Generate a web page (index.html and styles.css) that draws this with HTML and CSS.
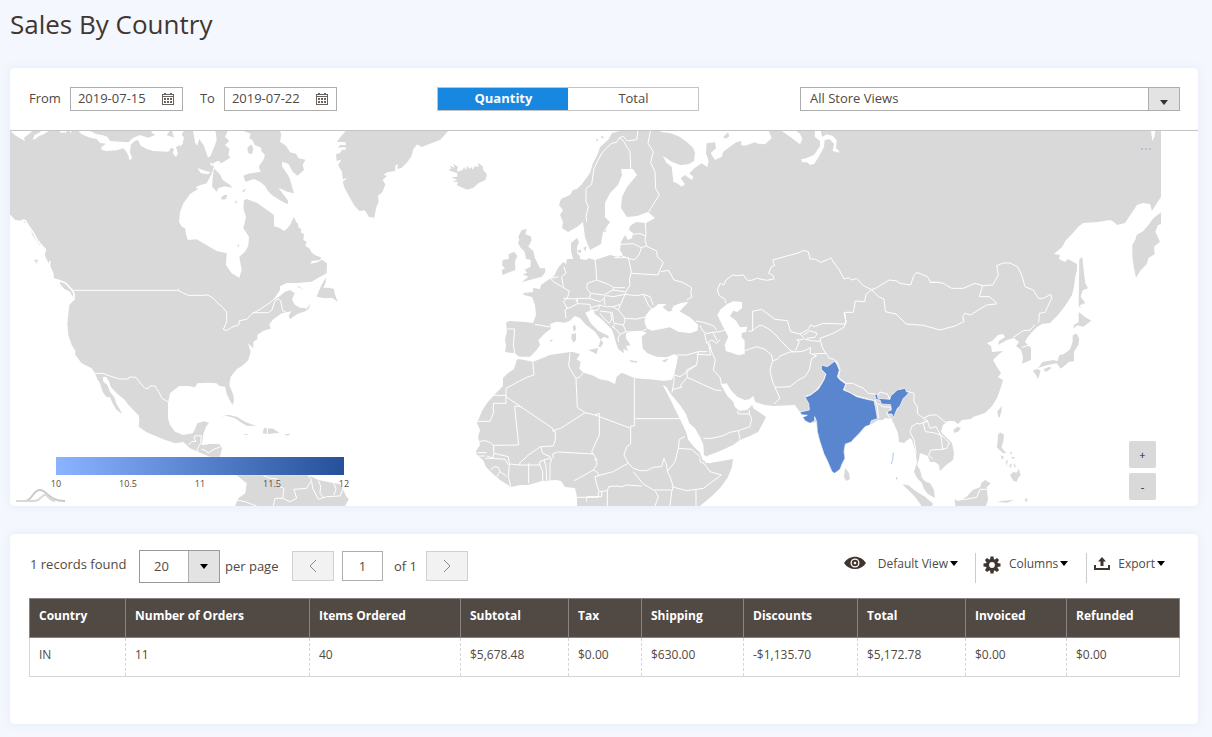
FILE: index.html
```html
<!DOCTYPE html>
<html lang="en">
<head>
<meta charset="utf-8">
<title>Sales By Country</title>
<link rel="stylesheet" href="styles.css">
</head>
<body>
<h1 class="page-title">Sales By Country</h1>

<section class="card">
  <form class="filters">
    <div class="dates">
      <label for="from">From</label>
      <span class="date-field">
        <input id="from" type="text" value="2019-07-15">
        <button type="button" class="calendar" aria-label="Choose start date"><svg width="12" height="12" viewBox="0 0 12 12"><use href="#calendar"/></svg></button>
      </span>
      <label for="to" class="to-label">To</label>
      <span class="date-field">
        <input id="to" type="text" value="2019-07-22">
        <button type="button" class="calendar" aria-label="Choose end date"><svg width="12" height="12" viewBox="0 0 12 12"><use href="#calendar"/></svg></button>
      </span>
    </div>
    <div class="switch">
      <button type="button" class="switch-item active">Quantity</button>
      <button type="button" class="switch-item">Total</button>
    </div>
    <span class="select store-select">
      <select aria-label="Store view"><option>All Store Views</option></select>
      <span class="arrow"></span>
    </span>
  </form>

  <div class="map">
    <svg class="world" viewBox="10 131 1188 375" role="img" aria-label="World map of sales">
      <!-- North America -->
      <g class="land">
        <path d="M10,131H186V180L198,189 190,194 183,204 180,212 179,222 182,227 188,240V294H73L69,287 62,282 54,278 52,270 48,262 45,256 44,249 38,243 33,236 29,226 23,221 15,220 10,215z"/>
        <g transform="translate(180 125) scale(.33333)">
          <path d="M-9,14H145L135,35 148,48 135,60 149,72 145,88 150,98 135,108 112,108 98,116 90,112 92,120 102,124 96,145 80,175 62,180 40,190 30,205 -9,230z"/>
          <path d="M-6,300 15,310 22,345 50,343 75,358 110,378 140,385 138,420 155,445 178,458 185,435 178,395 195,380 205,362 207,335 190,310 198,275 190,250 192,226 200,222 232,234 262,256 282,270 282,304 298,308 312,318 322,310 330,300 342,275 348,290 354,296 356,308 364,312 362,322 372,328 370,345 380,350 376,362 390,372 394,382 405,390 425,398 418,406 395,408 392,416 412,412 426,404 441,415 440,445 415,458 395,470 350,474 320,474 295,486 280,505 240,550 205,590H-6z"/>
          <path d="M102,130 120,148 128,165 150,180 158,188 132,184 115,190 110,200 96,185 98,160zM122,220 132,210 142,210 138,222 128,224zM165,225 172,232 168,238zM116,98 135,110 120,114z"/>
          <path d="M180,14H298L304,28 300,50 318,62 330,82 348,86 356,100 376,104 368,120 372,135 352,152 338,140 325,116 306,110 306,124 324,150 330,162 334,178 342,205 322,200 295,188 325,228 322,238 300,226 278,212 262,196 256,184 240,170 222,162 196,170 190,152 204,146 232,142 242,140 236,125 250,105 255,90 244,78 244,68 224,60 218,46 208,40 212,26z"/>
          <path d="M410,515 422,485 437,458 438,470 430,488 448,488 462,492 465,510 474,530 456,518 434,520z"/>
          <path d="M352,482 370,492 356,488z"/>
        </g>
        <g transform="translate(60 280) scale(.33333)">
          <path d="M0,20 30,35 42,60 28,75 22,130 25,165 35,195 46,212 46,225 65,250 95,265 105,280 112,298 120,310 128,335 138,350 150,352 158,370 168,388 186,403 178,385 168,370 165,355 150,335 142,315 130,305 128,292 138,290 148,305 152,320 170,340 192,358 206,375 220,390 236,406 238,422 236,440 260,457 310,478 345,490 370,486 390,505 420,518 450,530H480L486,505 478,492 450,492 425,496 430,462 438,440 447,428 432,424 412,430 405,448 398,460 370,465 345,455 330,435 324,415 324,370 330,340 345,328 358,318 385,318 405,322 412,310 450,308 470,310 478,318 495,320 500,342 510,362 518,375 522,362 520,345 508,315 512,290 530,268 550,255 565,240 572,215 564,190 580,205 580,185 592,178 592,165 610,152 632,146 628,132 640,118 665,100 695,94 686,106 690,118 712,102 740,92 736,84 722,84 704,74 696,58 704,40 690,30 675,35 655,52 640,60 660,30 660,5H0z"/>
          <path d="M478,412 505,404 530,410 555,425 588,438 560,437 545,428 525,415 498,407zM612,444 640,446 658,458 625,462 608,460zM675,462H690L688,466H676zM550,462H565L560,466zM738,88 752,70 744,90z"/>
          <path d="M530,586H742L758,592 775,600 805,606 838,612 848,625 858,648 866,658 855,678H525L535,655 556,640 560,610z"/>
        </g>
        <!-- Greenland and Iceland -->
        <g transform="translate(330 125) scale(.33333)">
          <path d="M50,14H358L330,45 300,56 275,66 262,58 250,72 245,92 232,112 215,128 202,132 203,116 196,122 196,138 172,142 160,150 172,152 158,165 166,178 158,200 144,212 146,230 138,250 133,278 117,276 104,256 88,258 72,240 58,215 44,190 38,170 52,160 38,162 36,140 24,120 34,104 20,108 18,88 30,84 36,74 48,74 46,66 24,68 30,60 48,60 46,52 20,50z"/>
          <path d="M356,136 364,130 360,122 374,128 370,116 384,126 380,140 398,135 402,126 408,136 412,122 418,132 424,126 428,134 434,124 446,126 444,114 458,124 460,136 471,148 466,165 445,175 430,188 412,194 392,186 380,180 385,172 366,170 382,165 364,157 382,155 382,145z"/>
        </g>
      </g>
      <g class="water" transform="translate(0 125) scale(.33333)">
        <path d="M28,14 44,30 60,40 75,47 72,38 88,26 98,17 100,14zM98,44 104,30 120,22 125,14H152L132,28 116,34 106,42zM178,14 182,24 195,22 198,27 200,14zM206,14 212,24 217,14z"/>
        <path d="M232,14 245,28 270,38 290,42 300,54 318,56 305,65 304,74 320,78 350,76 370,70 378,78 386,94 388,106 397,100 390,82 392,60 404,48 414,45 422,62 440,72 460,78 505,80 514,68 522,72 518,85 528,96 534,85 528,66 548,56 540,44 550,38 545,28 554,14H515L522,38 500,30 508,20 500,14H452L456,24 466,30 445,38 420,30 400,38 385,52 360,50 330,48 322,35 305,30 290,28 275,20 262,14zM578,14 584,44 592,60 600,36V14z"/>
      </g>
      <g class="water" transform="translate(180 125) scale(.33333)">
        <path d="M38,14 46,30 44,52 52,62 56,40 72,62 84,98 92,92 104,62 110,45 106,14zM52,128 66,134 92,142 84,148 62,144zM0,30 12,36 8,56 0,66z"/>
        <path d="M202,68 214,58 220,70 216,88 204,84zM174,356 178,362 172,366z" class="fill-land"/>
        <path d="M186,198 198,190 192,202z" class="fill-land"/>
      </g>
      <g class="border" transform="translate(0 125) scale(.33333)">
        <path d="M30,272 46,290 60,302 66,286 76,286 86,304 98,320 112,346 122,358 136,374 132,388 116,386 106,368 92,350 80,330 68,318 60,302M70,300 88,322 96,344 112,362 128,378M85,320 108,372M64,310 84,340M150,408 148,425 158,445 160,464 176,466 196,474 214,492 222,505 222,525M160,464 180,480 204,510 218,515" stroke-width="5"/>
        <path d="M216,496H534"/>
        <path d="M102,404 114,404 110,416z" class="fill-land"/>
      </g>
      <g class="border" transform="translate(60 280) scale(.33333)">
        <path d="M355,26V32L372,40 386,46 424,46 444,45 460,55 472,68 488,82 500,96V125L490,148 500,152 515,142 537,134 538,122 560,118 575,102 600,88 630,68 650,50M578,98 625,98 636,90 645,62 655,57 662,62 668,92 680,98"/>
        <path d="M105,280 128,280 150,288 178,297 205,297 208,291 228,292 240,308 255,325 266,325 270,318 285,318 296,335 306,355 325,366M386,495 396,484 408,484 402,474 404,468 424,467 422,488M422,488 430,495M422,490 410,510 416,515M424,508 438,512 444,520 465,506 480,502M622,442V462"/>
        <path d="M610,586 630,595 650,596 660,620 672,625 668,655 690,665 710,655 702,628 740,625 755,600 745,588M755,605 758,625 775,658 800,650 840,648 852,620M775,602 782,618 780,640 790,652M820,608 828,625 822,645M530,660 555,665 590,678M640,678 645,655 668,655"/>
      </g>

      <!-- Europe, Asia and Africa -->
      <path class="land" d="M620,131H1161V197L1157,203 1152,211 1150,204 1143,203 1137,205 1131,214 1125,223 1117,225 1114,222 1110,220 1098,222 1083,223 1078,227 1073,233 1066,240 1062,247 1054,254 1060,255 1059,259 1065,262 1068,259 1077,264 1077,270 1075,278 1074,287 1072,295 1065,306 1058,315 1050,323 1042,324 1037,327 1032,332 1027,338 1025,342 1031,348 1031,360 1026,362 1022,364 1023,357 1021,350 1016,346 1019,342 1014,338 1007,340 998,345 999,341 1005,337 1003,334 998,335 992,341 987,343 991,346 992,352 1003,351 998,355 993,360 997,367 1001,373 998,377 1003,380 1001,387 997,398 992,406 985,413 973,417 971,419 962,420 958,424 954,421 948,421 943,425 941,432 947,438 952,443 954,453 953,460 945,466 940,471 939,465 935,462 930,462 928,456 920,453 919,459 917,465 920,470 922,478 926,482 930,483 934,490 935,498 928,494 924,489 922,483 917,478 914,472 917,462 915,450 912,440 910,438 904,443 899,442 898,433 894,424 891,419 885,418 883,420 878,420 872,424 867,425 860,433 853,440 847,444 844,447 845,456 843,463 840,470 835,473 831,470 827,460 822,448 818,437 816,422 813,423 806,422 803,418 808,415 800,412 797,408 795,405 773,406 758,404 752,403 753,408 766,417 762,425 758,432 750,436 740,440 733,445 720,451 707,456 705,463 716,462 733,459 732,467 728,477 721,487 712,496 700,506H577V497L575,488 565,487 561,481 556,480 542,481 528,485 520,485 511,487 500,480 492,473 486,467 483,460 477,455 476,451 480,445 478,437 480,430 477,423 482,411 487,403 497,392 503,386 503,378 508,373 514,369 517,359 513,353 505,352 506,346 505,339 507,332 506,323 509,321 525,322 533,323 536,315 535,305 532,297 524,295 523,293 533,292 533,288 540,289 541,285 548,280 554,276 558,268 563,262 566,264 567,259 573,259 571,251 571,243 577,238 579,242 577,247 577,253 580,256 580,259 587,260 588,258 595,260 610,255 618,257 623,255 620,250 621,242 625,235 628,240 632,238 633,233 629,230 630,226 636,222 646,223 655,218 648,212 637,216 627,217 621,208 622,197 627,187 637,175 633,169 621,169 622,175 618,185 610,193 605,203 605,217 610,222 603,232 601,244 590,250 588,245 585,237 583,222 577,227 568,232 562,228 563,222 560,215 563,210 559,205 561,199 570,195 573,190 577,189 582,184 590,173 593,163 597,156 600,147 608,140 612,133z"/>
      <g class="land" transform="translate(490 125) scale(.33333)">
        <path d="M85,335 95,315 110,312 106,328 122,334 125,345 115,365 130,378 135,400 150,430 165,430 166,440 156,455 130,462 95,472 115,455 98,448 112,444 104,434 122,425 122,405 108,402 104,380 92,368 84,355 88,345z"/>
        <path d="M38,405 56,402 56,388 72,380 82,392 75,410 76,435 58,442 38,450 35,436 45,430 36,420z"/>
        <path d="M262,376 274,374 272,384 264,382zM280,368 290,364 286,380zM340,320 350,310 346,322zM318,40 326,44 320,50zM332,32 342,36 336,42z"/>
      </g>
      <g class="land" transform="translate(930 125) scale(.33333)">
        <path d="M693,262 670,280 655,300 640,318 620,330 616,344 607,360V395L612,430 618,458 632,436 650,418 656,398 674,388 672,365 690,350 676,320 684,300 693,298z"/>
        <path d="M448,402 457,396 462,445 466,475 474,490 458,496 452,515 466,534 450,540 452,552 446,540z"/>
      </g>
      <g class="land" transform="translate(870 300) scale(.33333)">
        <path d="M632,0 642,8 634,14zM626,36 646,52 664,62 640,80 622,76 610,86 612,74 626,66zM608,106 620,100 628,118 625,135 612,155 612,184 596,186 590,192 572,206 560,190 530,196 504,204 518,186 550,180 562,184 568,166 582,162 600,148 608,125zM520,208 538,200 545,204 528,216zM488,212 502,206 512,212 504,238 498,225zM384,348 382,334 396,318 394,336 388,354zM250,390 262,380 273,384 264,396 252,398z"/>
        <path d="M384,405 390,397 402,404 400,425 394,440 402,452 410,458 400,460 388,450 380,440 383,425zM420,525 430,516 440,518 446,506 452,525 446,532 440,545 430,542zM392,466 402,470 396,480zM408,484 414,480 410,500zM424,470 436,472 428,478zM418,495 428,490 420,505zM430,488 438,498 434,504zM420,455 428,458 422,464z"/>
        <path d="M254,598 268,602 290,590 308,570 330,562 335,548 345,540 362,550 350,562 354,600 348,618H256zM97,553 115,556 140,575 165,590 190,612 185,618H155L135,590zM382,606 400,602 432,600 412,608zM464,595 474,598 468,608z"/>
      </g>
      <path class="land" d="M845,468 849,473 850,479 846,481 844,477z"/>

      <g class="water" transform="translate(700 125) scale(.33333)">
        <path d="M-130,14-112,22-90,24-64,34-40,50-20,70-15,85-18,108-34,118-60,120-85,110-112,92-100,114-85,125-80,170-66,176-55,185-45,178-58,160-45,150-25,165-20,155-32,145-15,128 5,115 22,126 26,108 18,85 20,55 45,52 48,70 32,85 45,105 65,95 70,80 108,52 125,48 122,60 135,62 165,52 175,56 195,58 215,40 205,14z"/>
        <path d="M240,14 270,35 300,58 307,42 300,26 284,14zM345,14 344,35 360,48 360,64 342,90 318,100 304,103 306,112 322,112 330,120 343,116 358,92 372,66 374,46 388,42 402,56 398,78 418,83 416,76 408,70 410,46 398,32 380,28 366,36 362,14z"/>
        <path class="fill-land" d="M70,36 84,22 88,34 76,42z"/>
        <path d="M1353,18 1357,48 1363,36 1366,18z"/>
      </g>
      <g class="water" transform="translate(470 290) scale(.33333)">
        <path d="M118,192 132,188 148,200 180,200 200,180 210,165 205,150 225,130 243,116 240,102 260,95 285,98 300,92 314,78 330,84 345,102 375,125 392,150 385,170 392,172 400,160 392,148 402,140 415,146 416,138 385,122 362,100 346,68 368,58 375,72 395,88 425,118 432,135 436,152 445,178 462,190 460,176 474,184 468,168 482,166 468,145 468,130 488,124 510,122 530,128 515,140 518,175 532,190 560,200 590,202 614,192 624,200 618,232 606,270 580,272 540,268 495,265 455,248 440,260 435,282 415,272 390,268 365,255 340,248 328,236 332,215 320,208 330,192 305,185 240,195 190,215 150,208 138,208z"/>
        <path d="M530,115 523,95 528,75 540,60 555,50 565,42 590,42 578,52 595,65 612,60 632,66 660,82 685,105 682,122 660,130 625,125 600,112 570,118 545,122zM605,60 610,48 635,38 656,36 640,52 628,66z"/>
        <path d="M578,284 590,292 602,312 630,345 648,372 658,400 675,415 692,445 700,465 702,495 712,500 735,498 735,515 718,520 698,510 690,488 672,470 655,450 648,425 630,388 615,358 600,326z"/>
        <path class="fill-land" d="M305,132 318,130 318,150 310,158 304,145zM308,112 315,102 318,118 312,126zM355,180 384,174 380,192zM478,210 502,214 500,218 482,216zM574,213 596,205 586,217zM238,152 248,148 246,155z"/>
      </g>
      <g class="water" transform="translate(690 290) scale(.33333)">
        <path d="M82,75 92,58 112,42 130,34 156,36 156,54 142,66 130,62 120,78 138,92 150,112 172,110 168,126 156,128 154,140 164,152 164,192 145,196 125,188 108,184 104,165 115,140 98,108z"/>
        <path d="M92,283 110,280 124,302 142,320 164,330 178,328 190,318 196,336 222,345 205,356 186,345 172,360 148,362 134,350 130,336 112,318z"/>
      </g>

      <!-- Country borders -->
      <g class="border" transform="translate(490 125) scale(.33333)">
        <path d="M290,290 288,275 295,245 288,230 288,190 305,178 312,130 335,85 350,68 365,55 380,52 388,38 402,50 412,68 420,80 422,132M388,38 400,34 412,48 440,44 444,16M482,16 474,55 490,80 482,112 495,140 497,190 508,210 492,235 475,262M466,290 468,325 465,345 470,362 454,368 430,356 392,358M425,328 450,326 466,332M454,368 448,388 434,404 420,402 394,392M372,398H415L424,440 418,465 420,480 408,500 405,510M424,445 505,450 508,438 520,412 502,395 500,378 470,364M512,440 536,436 552,465 578,472 605,488 602,505 606,516 590,525M315,404 318,430 320,465 355,478 372,488 405,488M320,465 292,475 290,490 302,505 342,510 368,495M302,505 298,520 262,520 258,530M372,488 368,495 405,500M205,455 182,460 190,470 215,485 238,498 232,520 220,530 232,550 225,555 228,580M222,425 228,445 215,455 220,485M220,520 262,522 262,536 240,548 228,550M298,520 330,530 342,520 348,510M262,536 300,538 302,548 330,540 345,545 368,545 392,538M302,548V556L322,556 330,542M330,558 362,562 365,585 358,595 340,578 330,565M342,520 345,540M405,508 392,538 385,555 402,575 405,590 400,600 372,595 366,560M368,545 385,555M350,512 370,515 405,508 440,512 460,508 475,540 485,552M460,508 480,515 490,540M405,580 440,582 472,575M400,600 408,620 390,628 375,610 366,605M408,620 450,622 470,612M390,628 384,640 386,650M366,605 375,600M135,598 180,606M52,612 74,612 70,660 75,690"/>
        <path d="M618,588 640,592 670,602 680,615M630,602 640,620 650,626 668,622 690,620 712,612M644,626 650,655 665,645 680,655 690,645M668,622 682,648M655,655 662,690 620,688"/>
      </g>
      <g class="border" transform="translate(470 290) scale(.33333)">
        <path d="M188,212 192,255 170,262 108,295 108,320M60,316H108V340H70V370L60,394H22M108,320 248,415V422M134,350V348L155,350M134,350 146,465 70,466 62,458 45,452 22,455M300,188 296,228 308,250 318,265M340,248 328,262 318,265 322,352 345,368 375,375 482,415V408L493,408V265M345,368 272,415 248,422 256,425V450L250,468 212,470M375,375 388,370M388,370V435L365,485 370,492 300,488 262,486 248,492 250,505M496,386H630M482,415V462L470,470 462,495 475,520 455,530 430,545 388,556 380,545 370,540 382,522 375,505M370,492 382,512M475,520 490,535 510,542 530,542 550,532 575,530 582,505 590,525 592,545 615,515 625,475 628,448 645,440M625,475 665,478 690,500M592,545 600,560 610,590 605,605M490,545 520,582 550,600 605,600M605,590 650,602 680,598 700,595 754,555 720,545 702,520 690,515V505M678,598V648M388,556 375,560 382,590 388,605 412,602 416,590 440,588 455,590 470,585 515,588M312,572 335,560 370,540M320,622H385L385,605M412,602V648M395,605V620H350V635M555,602 565,620 555,648M605,605 600,648"/>
        <path d="M70,466 72,490 115,500 118,522 148,525 150,518 175,495 212,470 218,490 240,500 245,510 240,520M148,525H208L210,515 222,510 240,505M176,520V580M208,520 218,545V575M222,510 228,530 230,570M240,520V572M118,522 115,560 122,588M45,505 68,505 72,490M22,488H50M22,498H45M50,498 72,505M68,505 105,508 115,525M62,540 72,530 85,532 90,545 80,560M90,545 105,555 110,560"/>
        <path d="M620,195 650,195 685,185 712,185M685,185 680,225 630,260 612,255M680,225 650,240 652,262 735,300 755,302M652,262 632,285 635,292 608,298M612,240V275L606,308"/>
      </g>
      <g class="border" transform="translate(690 290) scale(.33333)">
        <path d="M58,160 66,188 76,210 70,240 90,262 95,285 108,298M178,360V372H145L142,362M178,372 185,385 180,410 145,422 150,448M40,445 65,445 100,437 120,427 145,422M165,182 200,170 225,178 245,195 248,212 240,240 246,270 255,292 300,290 325,270 345,260 358,240 365,205 380,198 360,190 362,172 345,182 330,185 300,186 270,198 262,208 248,212M255,292 270,325 252,342M188,122 205,108 215,106 235,116 258,135 270,150 300,180 312,185M188,122V64L215,58 255,88 292,92 302,125 330,132 355,118 362,105 372,110 400,100 462,102M188,122 175,125M316,182 328,155 320,150 340,148M330,132 345,148 365,152 392,154 398,175 408,190 370,192M340,135 360,122 382,130 375,142 350,145M392,154 390,145 430,130 462,112 468,95 462,68M408,190 418,205 432,208 440,218M408,252 402,270 380,300 362,315 348,318"/>
        <path d="M440,212 450,240 445,262 468,280 488,280 520,295 535,310 555,312M468,280 462,300 500,318 552,332M560,320 570,306 592,312 600,328 570,328M555,330 562,350 566,385M562,340 578,350 602,352 604,360 590,368 600,385 608,390M655,305 672,310 672,335 682,350 682,370 700,385"/>
        <path d="M700,385 712,392 690,402 680,400 665,410 660,425 672,450 678,485 675,510M700,385 720,375 740,375 760,392M712,392 720,415 738,410 750,432 770,450 780,462M712,392 700,400 706,425 730,428 752,435 755,452M755,452 758,478 722,480 716,495 728,508M690,540 710,550M755,478 770,475 776,460M760,392 780,405"/>
      </g>
      <g class="border" transform="translate(700 125) scale(.33333)">
        <path d="M78,535 74,522 58,512 52,495 60,475 72,480 78,465 98,450 110,452 130,450 142,466 155,466 170,460 200,466 222,462 220,452 206,445 214,425 224,422 218,405 300,382 310,376 325,380 330,402 345,402 362,412 388,402 392,398 418,435 432,462 445,458 455,465 470,460 490,482 515,494 498,508 494,530 466,528 460,562 434,562 438,592 432,600M515,494 530,488 568,465 590,468 600,475 632,480 640,455 650,442 682,455 692,472 720,472M515,494 535,515 552,522 556,560 588,567 618,597"/>
      </g>
      <g class="border" transform="translate(930 125) scale(.33333)">
        <path d="M0,472H20L40,475 65,490 100,490 135,475 158,482 188,480 205,450 200,422 220,414 240,414 262,425 275,450 285,485 310,495 325,520 340,520 362,508 365,520 345,562 328,565M158,482 148,515 178,515 198,532V538"/>
      </g>
      <g class="border" transform="translate(870 300) scale(.33333)">
        <path d="M108,72 160,76 210,90 255,78 282,65 278,50 284,40 302,45 325,30 350,15 378,12M508,40 506,68M430,112 460,92 480,90 495,74M455,142 478,135M258,600 285,598 320,592 330,568H350"/>
      </g>

      <!-- India -->
      <g class="country" transform="translate(690 290) scale(.33333)">
        <path d="M394,225 412,230 434,214 440,222 448,240 442,260 450,270 467,282 460,300 480,308 500,320 530,328 552,332 556,350 560,372 562,386 544,392 540,405 525,410 508,430 490,448 484,456 466,462 462,485 465,505 456,522 450,538 434,550 426,545 412,512 402,492 390,455 382,425 380,395 374,380 374,392 360,400 345,392 338,382 352,376 334,374 330,366 358,360 356,340 345,322 362,315 385,298 402,270 408,252 394,238z"/>
        <path d="M554,315 562,312 564,325 600,328 602,318 622,300 645,295 650,306 658,306 648,318 640,325 630,348 622,355 610,384 606,372 592,372 594,364 604,360 602,344 574,342 570,330 558,328z"/>
        <path class="islands" d="M610,488 608,508 604,522M620,562V568"/>
      </g>
    </svg>

    <a class="menu-dots" href="#" aria-label="Chart menu"><i></i><i></i><i></i></a>

    <div class="legend">
      <div class="legend-bar"></div>
      <div class="legend-labels"><span>10</span><span>10.5</span><span>11</span><span>11.5</span><span>12</span></div>
    </div>
    <svg class="chart-mark" width="52" height="15" viewBox="0 0 52 15">
      <path d="M1,13H10C17,13 18,2 25,2S33,13 50,13" fill="none" stroke="#c9c9c9" stroke-width="2"/>
      <path d="M1,13H19C26,13 26,7 30,7S34,13 40,13" fill="none" stroke="#d9d9d9" stroke-width="2"/>
    </svg>
    <div class="zoom"><button type="button">+</button><button type="button">-</button></div>
  </div>
</section>

<section class="card records">
  <div class="toolbar">
    <span class="count">1 records found</span>
    <span class="select size-select">
      <select id="size"><option>20</option></select>
      <span class="arrow"></span>
    </span>
    <label for="size" class="per-page">per page</label>
    <button type="button" class="pager" aria-label="Previous page"><svg width="10" height="14" viewBox="0 0 10 14"><path d="M8,1 2,7 8,13"/></svg></button>
    <input class="page-number" type="text" value="1" aria-label="Page">
    <span class="of">of 1</span>
    <button type="button" class="pager" aria-label="Next page"><svg width="10" height="14" viewBox="0 0 10 14"><path d="M2,1 8,7 2,13"/></svg></button>

    <div class="actions">
      <button type="button" class="action view">
        <svg width="22" height="14" viewBox="0 0 22 14"><path fill-rule="evenodd" d="M0,7C5,-1.500 17,-1.500 22,7 17,15 5,15 0,7zM11,2.500A4.500,4.500 0 1 0 11,11.500 4.500,4.500 0 1 0 11,2.500z" fill="#41362f"/><circle cx="11" cy="7" r="3.200" fill="#41362f"/><circle cx="11" cy="7" r="1.300" fill="#fff"/></svg>
        <span>Default View</span><i class="caret"></i>
      </button>
      <button type="button" class="action columns">
        <svg width="18" height="18" viewBox="-9 -9 18 18"><g fill="#41362f"><path id="tooth" d="M-1.500,-8.500H1.500L2,-5H-2zM-1.500,8.500H1.500L2,5H-2z"/><use href="#tooth" transform="rotate(45)"/><use href="#tooth" transform="rotate(90)"/><use href="#tooth" transform="rotate(135)"/></g><circle r="4.500" fill="none" stroke="#41362f" stroke-width="3.200"/></svg>
        <span>Columns</span><i class="caret"></i>
      </button>
      <button type="button" class="action export">
        <svg width="16" height="13" viewBox="0 0 16 13" fill="#41362f"><path d="M0,8H2V11H14V8H16V13H0zM8,0 12,4.500H9.500V9H6.500V4.500H4z"/></svg>
        <span>Export</span><i class="caret"></i>
      </button>
    </div>
  </div>

  <table class="grid">
    <colgroup><col class="c96"><col class="c184"><col class="c151"><col class="c108"><col class="c73"><col class="c102"><col class="c114"><col class="c108"><col class="c101"><col class="c113"></colgroup>
    <thead><tr><th>Country</th><th>Number of Orders</th><th>Items Ordered</th><th>Subtotal</th><th>Tax</th><th>Shipping</th><th>Discounts</th><th>Total</th><th>Invoiced</th><th>Refunded</th></tr></thead>
    <tbody><tr><td>IN</td><td>11</td><td>40</td><td>$5,678.48</td><td>$0.00</td><td>$630.00</td><td>-$1,135.70</td><td>$5,172.78</td><td>$0.00</td><td>$0.00</td></tr></tbody>
  </table>
</section>

<svg class="defs" width="0" height="0" aria-hidden="true">
  <symbol id="calendar" viewBox="0 0 12 12">
    <path fill="#6b645e" fill-rule="evenodd" d="M0,1H2V0H4V1H8V0H10V1H12V12H0zM1,4V11H11V4z"/>
    <path fill="#6b645e" d="M2,5H4V7H2zM5,5H7V7H5zM8,5H10V7H8zM2,8H4V10H2zM5,8H7V10H5zM8,8H10V10H8z"/>
    <path fill="#fff" d="M1,2H11V3H1z"/>
  </symbol>
</svg>
</body>
</html>
```
FILE: styles.css
```css
* { box-sizing: border-box; }
body {
  margin: 0;
  padding: 5px 14px 13px 10px;
  background: #f4f7fd;
  color: #514943;
  font: 13px/18px "Open Sans", "Liberation Sans", sans-serif;
}
button, input, select { font: inherit; color: inherit; }
button { cursor: pointer; }
.defs { position: absolute; }
.page-title {
  margin: 0 0 25px;
  font-size: 26px;
  line-height: 38px;
  font-weight: 400;
  color: #41362f;
}
.card {
  background: #fff;
  border-radius: 5px;
  box-shadow: 0 0 8px #e3eaf8;
}

.filters {
  display: flex;
  justify-content: space-between;
  align-items: center;
  height: 63px;
  padding: 0 18px 0 19px;
  border-bottom: 1px solid #c4c4c4;
}
.dates { display: flex; align-items: center; gap: 9px; }
.dates label { padding-bottom: 2px; }
.to-label { margin-left: 8px; }
.date-field {
  display: flex;
  align-items: center;
  width: 113px;
  height: 24px;
  padding: 0 8px 0 7px;
  border: 1px solid #adadad;
}
.date-field input { width: 100%; min-width: 0; padding: 0 0 2px; border: 0; background: none; outline: 0; }
.calendar { display: flex; padding: 0; border: 0; background: none; }
.switch { display: flex; width: 262px; height: 24px; border: 1px solid #c4c4c4; }
.switch-item { flex: 1; padding: 0 0 2px; border: 0; background: #fff; line-height: 20px; }
.switch-item.active { background: #1787e0; color: #fff; font-weight: 700; }

.select { display: flex; position: relative; border: 1px solid #adadad; }
.select select { flex: 1; border: 0; padding: 0 9px; background: none; appearance: none; outline: 0; }
.select .arrow {
  position: absolute;
  inset: 0 0 0 auto;
  width: 31px;
  display: grid;
  place-items: center;
  background: #e3e3e3;
  border-left: 1px solid #adadad;
  pointer-events: none;
}
.arrow::after, .caret {
  content: "";
  border: 4px solid transparent;
  border-top: 5px solid #000;
  border-bottom: 0;
}
.store-select { width: 380px; height: 24px; }
.store-select select { padding-bottom: 2px; }
.store-select .arrow { padding-top: 7px; }
.store-select .arrow::after { border-top-color: #333; }

.map { position: relative; overflow: hidden; border-radius: 0 0 5px 5px; }
.world { display: block; width: 100%; height: auto; }
.land, .fill-land { fill: #d9d9d9; stroke: none; }
.water { fill: #fff; }
.water .fill-land, .border .fill-land { fill: #d9d9d9; }
.border { fill: none; stroke: #fff; stroke-width: 3; stroke-linejoin: round; }
.country { fill: #5a86d0; stroke: #fff; stroke-width: 2; }
.islands { fill: none; stroke: #8aa8de; }
.menu-dots { position: absolute; top: 17px; right: 47px; display: flex; gap: 2px; }
.menu-dots i { width: 2px; height: 2px; background: #b3c3d4; }
.legend { position: absolute; left: 46px; bottom: 15px; width: 288px; }
.legend-bar { height: 18px; background: linear-gradient(90deg, #8ab4ff, #25509a); }
.legend-labels {
  display: grid;
  grid-template-columns: repeat(5, 72px);
  margin: 0 -36px;
  padding-top: 2px;
  text-align: center;
  font-size: 9px;
  line-height: 14px;
}
.chart-mark { position: absolute; left: 5px; bottom: 3px; }
.zoom { position: absolute; right: 42px; bottom: 6px; display: grid; gap: 5px; }
.zoom button { width: 27px; height: 27px; padding: 0; border: 0; border-radius: 2px; background: #d9d9d9; color: #222; font-size: 11px; }

.records { margin-top: 28px; padding: 15px 20px 47px 19px; }
.toolbar { display: flex; align-items: center; height: 34px; margin-bottom: 15px; }
.count { margin-bottom: 4px; padding-left: 1px; width: 110px; }
.size-select { width: 81px; height: 33px; border-color: #999; }
.size-select select { padding: 0 14px; }
.per-page { margin-left: 5px; width: 67px; }
.pager {
  display: grid;
  place-items: center;
  width: 42px;
  height: 30px;
  padding: 0;
  border: 1px solid #d0d0d0;
  background: #f2f2f2;
}
.pager path { fill: none; stroke: #8a8a8a; stroke-width: 1; }
.page-number { width: 41px; height: 30px; margin: 0 11px 0 8px; padding: 0; border: 1px solid #adadad; text-align: center; }
.of { width: 32px; }
.actions { display: flex; margin: 3px 13px 0 auto; }
.action {
  display: flex;
  align-items: flex-start;
  height: 30px;
  padding: 2px 0 0;
  border: 0;
  background: none;
  font-size: 12px;
}
.action svg { margin: 1px 8px 0 0; }
.action .caret { margin: 6px 0 0 2px; }
.view { margin-right: 17px; }
.view svg { margin: 1px 12px 0 0; }
.columns, .export { border-left: 1px solid #ccc; padding-left: 7px; }
.columns { margin-right: 18px; }
.export svg { margin-top: 2px; }

.grid { width: 100%; table-layout: fixed; border-collapse: collapse; font-size: 12px; text-align: left; }
.grid th { height: 39px; padding: 0 9px 4px; background: #514943; border: 1px solid #8a837f; color: #fff; font-weight: 700; }
.grid td { height: 39px; padding: 0 9px 4px; border: 1px solid #d6d6d6; border-left-style: dashed; border-right-style: dashed; }
.grid td:first-child { border-left-style: solid; }
.grid td:last-child { border-right-style: solid; }
.c96 { width: 96px; }
.c184 { width: 184px; }
.c151 { width: 151px; }
.c108 { width: 108px; }
.c73 { width: 73px; }
.c102 { width: 102px; }
.c114 { width: 114px; }
.c101 { width: 101px; }
.c113 { width: 113px; }
```
